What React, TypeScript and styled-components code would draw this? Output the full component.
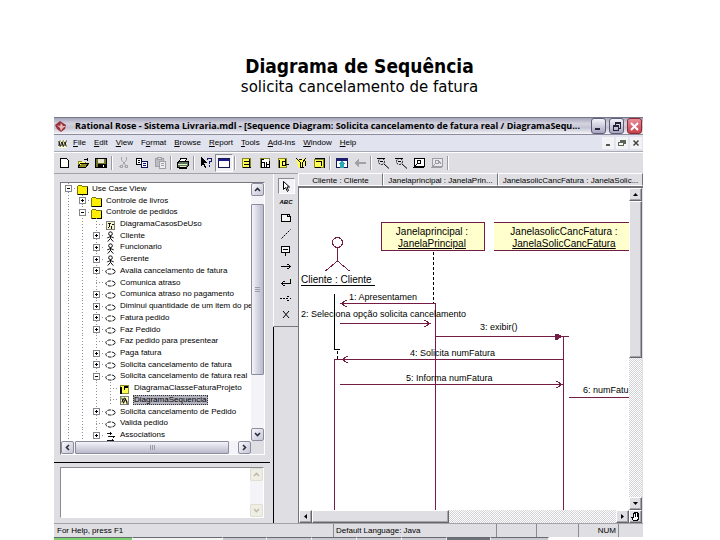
import React from "react";
import styled, { createGlobalStyle, css } from "styled-components";

const face = "#dfdfe3";
const maroon = "#741c44";
const uiFont = '"Liberation Sans", Arial, sans-serif';

const GlobalStyle = createGlobalStyle`
  *, *::before, *::after { box-sizing: border-box; }
  body { margin: 0; background: #fff; color: #000; font-family: ${uiFont}; font-size: 8px; }
  button { font: inherit; color: inherit; margin: 0; padding: 0; border: 0; background: none; }
  svg { display: block; flex: none; }
  h1, h2, p, ul { margin: 0; padding: 0; }
  ul { list-style: none; }
`;

const Page = styled.div`
  display: flex;
  flex-direction: column;
  height: 100vh;
  min-height: 540px;
  padding: 0 77px 0 54px;
`;

const Heading = styled.header`
  flex: none;
  height: 117px;
  padding-top: 54px;
  padding-left: 22px;
  text-align: center;
  white-space: nowrap;
`;

const Title = styled.h1`
  font: bold 19px/24px "DejaVu Sans Condensed", "DejaVu Sans", sans-serif;
`;

const Subtitle = styled.p`
  font: 15px/18px "DejaVu Sans", sans-serif;
`;

const AppWindow = styled.main`
  display: flex;
  flex-direction: column;
  flex: 1;
  min-height: 0;
  background: ${face};
`;

const TitleBar = styled.div`
  display: flex;
  align-items: center;
  flex: none;
  height: 18px;
  padding: 0 1px 0 0;
  gap: 3px;
  border-top: 1px solid #77778c;
  background: linear-gradient(#a5a5bb, #d4d4e0 35%, #c3c3d3 60%, #f4f4f8);
  border-bottom: 1px solid #8c8c9c;
`;

const WindowTitle = styled.h2`
  flex: 1;
  min-width: 0;
  padding-left: 4px;
  overflow: hidden;
  font: bold 9px/14px "Open Sans", "Noto Sans", sans-serif;
  white-space: nowrap;
`;

const CaptionButton = styled.button<{ $close?: boolean }>`
  display: grid;
  place-items: center;
  flex: none;
  width: 15px;
  height: 16px;
  border: 1px solid ${(p) => (p.$close ? "#8d2a34" : "#5d5d78")};
  border-radius: 3px;
  background: ${(p) =>
    p.$close ? "linear-gradient(#e8909a, #c8404c)" : "linear-gradient(#f4f4fa, #a6a6c0)"};
`;

const MenuBar = styled.nav`
  display: flex;
  align-items: center;
  flex: none;
  height: 17px;
  padding: 0 1px 0 3px;
  background: #e1e3ee;
  border-bottom: 1px solid #a9a9b2;
`;

const Menus = styled.div`
  display: flex;
  flex: 1;
  gap: 8px;
  padding-left: 5px;
`;

const MenuButton = styled.button`
  line-height: 12px;
  white-space: nowrap;
`;

const MdiButton = styled.button`
  display: grid;
  place-items: center;
  width: 12px;
  height: 12px;
  margin-left: 2px;
  background: #f3f3f5;
`;

const ToolBar = styled.div`
  display: flex;
  align-items: center;
  flex: none;
  height: 21px;
  padding-left: 2px;
  border-top: 1px solid #fff;
`;

const ToolButton = styled.button<{ $pressed?: boolean }>`
  display: grid;
  place-items: center;
  flex: none;
  width: 18px;
  height: 18px;
  ${(p) =>
    p.$pressed &&
    css`
      background: #f1f1f4;
      border: 1px solid;
      border-color: #8a8a92 #fff #fff #8a8a92;
    `}
`;

const ToolSeparator = styled.span`
  flex: none;
  width: 2px;
  height: 14px;
  margin: 0 2px 0 1px;
  border-left: 1px solid #9a9aa2;
  border-right: 1px solid #fff;
`;

const Body = styled.div`
  display: grid;
  grid-template-columns: 219px 25px minmax(0, 1fr);
  flex: 1;
  min-height: 0;
`;

const Sidebar = styled.section`
  display: flex;
  flex-direction: column;
  min-height: 0;
  border-top: 1px solid #a2a2aa;
`;

const TreeBox = styled.div`
  display: grid;
  grid-template: minmax(0, 1fr) 13px / minmax(0, 1fr) 13px;
  flex: 1;
  min-height: 0;
  margin: 8px 8px 0 6px;
  border: 1px solid;
  border-color: #77777f #fff #fff #77777f;
  background: #fff;
`;

const Tree = styled.ul`
  display: grid;
  grid-auto-rows: minmax(0, 1fr);
  min-width: 0;
  overflow: hidden;
`;

const TreeRow = styled.li`
  display: flex;
  align-items: center;
  min-height: 0;
  white-space: nowrap;
`;

const dots = "repeating-linear-gradient(#8f8f98 0 1px, transparent 1px 3px)";

const Guide = styled.span<{ $branch?: boolean }>`
  position: relative;
  display: grid;
  place-items: center;
  flex: none;
  width: 14px;
  align-self: stretch;
  background: ${dots} 7px 0 / 1px 100% no-repeat
    ${(p) =>
      p.$branch
        ? ", repeating-linear-gradient(90deg, #8f8f98 0 1px, transparent 1px 3px) 7px 50% / 7px 1px no-repeat"
        : ""};
`;

const Expander = styled.button`
  display: block;
  width: 7px;
  height: 7px;
  background: #fff;
`;

const NodeIcon = styled.span`
  display: grid;
  place-items: center;
  flex: none;
  width: 14px;
  height: 11px;
`;

const NodeLabel = styled.span<{ $selected?: boolean }>`
  margin-left: 2px;
  padding: 0 1px;
  line-height: 10px;
  ${(p) =>
    p.$selected &&
    css`
      background: #b2b2be;
      outline: 1px dotted #333;
      outline-offset: -1px;
    `}
`;

const XpBar = styled.div<{ $across?: boolean }>`
  display: flex;
  flex-direction: ${(p) => (p.$across ? "row" : "column")};
  min-width: 0;
  min-height: 0;
  background: #f3f3f8;
`;

const XpButton = styled.button<{ $off?: boolean }>`
  display: grid;
  place-items: center;
  flex: none;
  width: 13px;
  height: 13px;
  color: ${(p) => (p.$off ? "#bcbcae" : "#2c2c3c")};
  border: 1px solid ${(p) => (p.$off ? "#deded2" : "#8c8c9e")};
  border-radius: 2px;
  background: ${(p) => (p.$off ? "#eeeee4" : "linear-gradient(135deg, #f8f8fc, #c6c6d6)")};
`;

const XpThumb = styled.div<{ $across?: boolean }>`
  display: grid;
  place-items: center;
  flex: none;
  border: 1px solid #8c8c9e;
  border-radius: 1px;
  ${(p) =>
    p.$across
      ? "width: 154px; background: linear-gradient(#f4f4fa, #b9b9cb); margin-left: 1px;"
      : "height: 171px; background: linear-gradient(90deg, #f4f4fa, #b9b9cb); margin-top: 8px;"}
`;

const Spring = styled.div`
  flex: 1;
`;

const Corner = styled.div`
  background: ${face};
`;

const SidebarRule = styled.hr`
  flex: none;
  width: 216px;
  height: 1px;
  margin: 7px 0 4px;
  border: 0;
  background: #000;
`;

const DocBox = styled.div`
  display: flex;
  flex: none;
  height: 51px;
  margin: 0 9px 5px 6px;
  border: 1px solid;
  border-color: #8a8a92 #fff #fff #8a8a92;
  background: #fff;
`;

const DocText = styled.textarea`
  flex: 1;
  min-width: 0;
  padding: 2px;
  border: 0;
  resize: none;
  outline: none;
  font: inherit;
`;

const PaletteColumn = styled.div`
  display: flex;
  flex-direction: column;
  border-top: 1px solid #a2a2aa;
`;

const Palette = styled.div`
  display: flex;
  flex-direction: column;
  align-items: center;
  height: 153px;
  padding-top: 4px;
  border-left: 1px solid #fff;
  border-bottom: 1px solid #77777f;
`;

const PaletteButton = styled.button<{ $active?: boolean }>`
  display: grid;
  place-items: center;
  flex: none;
  width: 17px;
  height: 16px;
  ${(p) =>
    p.$active &&
    css`
      background: #f3f3f6;
      border: 1px solid;
      border-color: #8a8a92 #fff #fff #8a8a92;
    `}
`;

const PaletteRest = styled.div`
  flex: 1;
  border-left: 1px solid #000;
`;

const Document = styled.section`
  display: flex;
  flex-direction: column;
  min-height: 0;
  min-width: 0;
`;

const Lanes = styled.div`
  display: grid;
  grid-template-columns: 85px 115px minmax(0, 1fr);
  flex: none;
  height: 15px;
  border-bottom: 2px solid #73737a;
`;

const Lane = styled.div`
  overflow: hidden;
  border: 1px solid;
  border-color: #fff #73737a #fff #fff;
  line-height: 14px;
  text-align: center;
  white-space: nowrap;
`;

const Scroller = styled.div`
  display: grid;
  grid-template: minmax(0, 1fr) 13px / minmax(0, 1fr) 13px;
  flex: 1;
  min-height: 0;
  border-left: 1px solid #73737a;
  padding-right: 1px;
`;

const Canvas = styled.svg`
  width: 100%;
  height: 100%;
  min-width: 0;
  overflow: hidden;
  background: #fff;
  font-family: ${uiFont};
`;

const ClassicBar = styled.div<{ $across?: boolean }>`
  display: flex;
  flex-direction: ${(p) => (p.$across ? "row" : "column")};
  min-width: 0;
  min-height: 0;
  background: repeating-conic-gradient(#fff 0 25%, #d2d2d6 0 50%) 0 0 / 2px 2px;
`;

const raised = css`
  background: ${face};
  border: 1px solid;
  border-color: #fff #66666c #66666c #fff;
  box-shadow: inset -1px -1px 0 #a4a4aa;
`;

const ClassicButton = styled.button`
  ${raised}
  display: grid;
  place-items: center;
  flex: none;
  width: 13px;
  height: 13px;
`;

const ClassicThumb = styled.div<{ $across?: boolean }>`
  ${raised}
  flex: none;
  ${(p) => (p.$across ? "width: 137px;" : "height: 157px;")}
`;

const StatusBar = styled.footer`
  display: grid;
  grid-template-columns: 279px minmax(0, 1fr) 40px 42px 40px 25px;
  flex: none;
  height: 14px;
  border-top: 1px solid #a2a2aa;
  line-height: 14px;
`;

const StatusCell = styled.span<{ $end?: boolean }>`
  overflow: hidden;
  padding: 0 2px;
  white-space: nowrap;
  text-align: ${(p) => (p.$end ? "right" : "left")};
  & + & { border-left: 1px solid #8a8a92; }
  &:first-child { padding-left: 3px; }
`;

const TaskStrip = styled.div`
  display: flex;
  flex: none;
  height: 3px;
  background: #fff;
`;

const Task = styled.span<{ $tone: string; $w: number }>`
  flex: 0 1 ${(p) => p.$w}px;
  background: ${(p) => p.$tone};
  border-top: 1px solid #666a72;
  border-right: 1px solid #f4f4f4;
`;

type IconProps = { children: React.ReactNode; size?: number };
const Icon = ({ children, size = 14 }: IconProps) => (
  <svg width={size} height={size} viewBox={`0 0 ${size} ${size}`} fill="none" stroke="#000" shapeRendering="crispEdges" aria-hidden="true">
    {children}
  </svg>
);

const glyphs: Record<string, React.ReactNode> = {
  new: <path d="M2.5 2.5h6l2 2v7h-8z" fill="#fff" />,
  open: (
    <>
      <path d="M2 5h3l1 1h4v2h3l-3 4H2z" fill="#8c8c20" stroke="none" />
      <path d="M3 6h6v2H5l-2 3z" fill="#ffff60" stroke="none" />
      <path d="M1.5 11.5h8l3-4h-8l-3 4M8 3.5h2.5l1 1M11.5 2v3" />
    </>
  ),
  save: (
    <>
      <path d="M1.5 2.5h11v9h-11z" fill="#74742a" />
      <path d="M4 3h6v4H4z" fill="#e6e6d0" stroke="none" />
      <path d="M4 8.5h7v3H4z" fill="#000" />
      <path d="M9.5 9v2" stroke="#fff" />
    </>
  ),
  cut: (
    <g stroke="#a6a6ac">
      <path d="M4.5 1v3l4 5M9.5 1v3l-4 5" shapeRendering="auto" />
      <circle cx="4.5" cy="10.5" r="1.5" />
      <circle cx="9.5" cy="10.5" r="1.5" />
    </g>
  ),
  copy: (
    <>
      <path d="M1.5 2.5h5v6h-5z" fill="#fff" />
      <path d="M3 4.5h2M3 6.5h2" />
      <path d="M6.5 5.5h6v6h-6z" fill="#fff" stroke="#10105c" />
      <path d="M8 7.5h3M8 9.5h3" stroke="#10105c" />
    </>
  ),
  paste: (
    <g stroke="#a0a0a6">
      <path d="M2.5 2.5h8v8h-8z" fill="#bcbcc2" />
      <path d="M4.5 1.5h4v2h-4z" fill="#dedee2" />
      <path d="M6.5 5.5h6v7h-6zM8 7.5h3M8 9.5h3" fill="#eee" />
    </g>
  ),
  print: (
    <>
      <path d="M4.5 2.5h6l-1 3h-6z" fill="#fff" />
      <path d="M1.5 6.5l2-1h9v4l-2 2h-9z" fill="#5c7460" />
      <path d="M2 8.5h9M3.5 10.5h6" stroke="#e8f0c0" />
      <path d="M2.5 12.5h8" />
    </>
  ),
  help: (
    <>
      <path d="M2 1v9l2-2 2 4 1-1-2-4h3z" fill="#000" stroke="none" />
      <path d="M8.5 4V2.5h4v3h-2V8M10.5 9v2" stroke="#16166c" />
    </>
  ),
  pane: (
    <>
      <path d="M1.5 2.5h11v9h-11z" fill="#fff" stroke="#16164c" />
      <path d="M1 3h12v2H1z" fill="#1c1c88" stroke="none" />
    </>
  ),
  browseClass: (
    <>
      <path d="M2.5 2.5h8v9h-8z" fill="#ffff50" stroke="#85852a" />
      <path d="M4 5.5h5M4 8.5h5M9.5 3v9M3 11.5h8" />
    </>
  ),
  interaction: (
    <>
      <path d="M2.5 2.5h9v9h-9z" fill="#fff" stroke="#85852a" />
      <path d="M3.5 3v9M6.5 6v5M4 6.5h3M8.5 6v5M9 8.5h3M11.5 5v7M3 3.5h3M3 11.5h9" />
    </>
  ),
  component: (
    <>
      <path d="M2.5 2.5h8v9h-8z" fill="#ffff50" stroke="#85852a" />
      <path d="M3.5 4v8M6.5 5v5M9.5 3v6M6 5.5h3M10 8.5h3M6.5 9.5h3" />
    </>
  ),
  state: (
    <>
      <path d="M2 3h10v3l-3 6H5z" fill="#ffff50" stroke="none" />
      <path d="M2.5 2.5l4 4v5M11.5 2.5l-3 4v5M5 3.5h3M6 11.5h4M11.5 5v5" />
    </>
  ),
  deployment: (
    <>
      <path d="M2.5 3.5h9v8h-9z" fill="#ffff50" stroke="#85852a" />
      <path d="M3 2.5h9v9M4 5.5h5v4M3 11.5h6" />
    </>
  ),
  parent: (
    <>
      <path d="M1.5 2.5h11v9h-11z" fill="#fff" stroke="#16164c" />
      <path d="M1 2h12v3H1z" fill="#1c1c70" stroke="none" />
      <path d="M7 5l4 3H9v4H5V8H3z" fill="#28aab4" stroke="none" />
    </>
  ),
  back: <path d="M1 7l5-4v3h7v2H6v3z" fill="#a0a0a6" stroke="none" />,
  zoom: (
    <g shapeRendering="auto">
      <circle cx="5.5" cy="5.5" r="3" strokeDasharray="2 1" />
      <path d="M8 8l5 4.5M1 2.5h8M4 5.5h3" />
    </g>
  ),
  fit: (
    <>
      <path d="M2.5 2.5h10v8h-10z" fill="#fff" />
      <circle cx="7" cy="6" r="2" />
      <path d="M1 11.5h11M5 8l-3 4" />
    </>
  ),
  unfit: (
    <g stroke="#9c9ca4">
      <path d="M2.5 2.5h10v8h-10z" fill="#e9e9ed" />
      <circle cx="7" cy="6" r="2" />
      <path d="M1 11.5h11M8 4l3 4M5 8l-3 4" />
    </g>
  ),
  select: (
    <>
      <path d="M4.5 2.5v8l2-2 2 4 1-1-1.500-3.500h2.500z" fill="#fff" shapeRendering="auto" />
    </>
  ),
  note: <path d="M2.5 3.5h6v2h3v5h-9zM8.5 3.5h2v2" fill="#f4f4f4" />,
  anchor: <path d="M2.5 11.5l9-9" strokeDasharray="2 1" shapeRendering="auto" />,
  comment: <path d="M2.5 3.5h8v6h-8zM4 6.5h5M6.5 10v3" fill="#f4f4f4" />,
  message: <path d="M2 7.5h9M8.5 5l3 2.5-3 2.5" />,
  selfMessage: <path d="M11.5 4v4.5H3M5.5 6l-3 2.5 3 2.5" />,
  dashed: <path d="M1 7.5h9M8.5 5l3 2.5-3 2.5" strokeDasharray="2 1" />,
  destroy: <path d="M4 4l6 7M10 4l-6 7" shapeRendering="auto" />,
  folder: (
    <>
      <path d="M2.5 3.5l1-1h3l1 1h5v8h-10z" fill="#ffef00" stroke="#77770c" />
      <path d="M3 11.5h10M12.5 4v8" />
    </>
  ),
  useCaseDiagram: (
    <>
      <path d="M2.5 2.5h9v9h-9z" fill="#f4f4cc" stroke="#777" />
      <path d="M4 4.5h3M5.5 4v3l-2 3M9 5.5h2M8.5 7v4" />
    </>
  ),
  actor: (
    <g shapeRendering="auto">
      <circle cx="7" cy="4" r="2" />
      <path d="M7 6v3M3.5 8.5L7 7l3.5 1.500M4 12.5l3-3.5 3 3.5" />
    </g>
  ),
  useCase: <ellipse cx="7" cy="7" rx="5" ry="2.8" shapeRendering="auto" strokeDasharray="4 1" />,
  classDiagram: (
    <>
      <path d="M2.5 2.5h9v9h-9z" fill="#ffff50" stroke="#85852a" />
      <path d="M2 4h2v8H2zM6 3h5v2H8v3H6z" fill="#000" stroke="none" />
    </>
  ),
  sequenceDiagram: (
    <>
      <path d="M2.5 2.5h9v9h-9z" fill="#ffffc0" stroke="#777" />
      <path d="M4 4l2 6 2-5 2 6M4 9l3-5 3 5" shapeRendering="auto" />
    </>
  ),
  associations: <path d="M3 3.5h6M7.5 2v3M4 7.5h8M10.5 6v3M3 11.5h8M9.5 10v3" />,
  menu: (
    <>
      <path d="M1 2h12v11H1z" fill="#ffffd8" stroke="none" />
      <path d="M2 4l2 7 2-6 2 6 2-6 2 6M2 10l2-7M6 10l2-7M10 10l2-7" shapeRendering="auto" />
    </>
  ),
};

const AbcMark = styled.span`
  font: italic bold 6px/10px ${uiFont};
`;

const Glyph = ({ name, size = 14 }: { name: string; size?: number }) =>
  name === "abc" ? (
    <AbcMark>ABC</AbcMark>
  ) : (
    <svg width={size} height={size} viewBox="0 0 14 14" fill="none" stroke="#000" shapeRendering="crispEdges" aria-hidden="true">
      {glyphs[name]}
    </svg>
  );

const Arrow = ({ turn = 0, solid = false }: { turn?: number; solid?: boolean }) => (
  <svg width="9" height="9" viewBox="0 0 9 9" aria-hidden="true">
    <g transform={`rotate(${turn} 4.5 4.5)`}>
      {solid ? (
        <path d="M2 6h5L4.5 3z" fill="#000" />
      ) : (
        <path d="M2 6l2.5-2.5L7 6" fill="none" stroke="currentColor" strokeWidth="1.6" />
      )}
    </g>
  </svg>
);

const menus: [string, string, string][] = [
  ["", "F", "ile"], ["", "E", "dit"], ["", "V", "iew"], ["F", "o", "rmat"], ["", "B", "rowse"],
  ["", "R", "eport"], ["", "T", "ools"], ["", "A", "dd-Ins"], ["", "W", "indow"], ["", "H", "elp"],
];

const toolGroups = [
  ["new", "open", "save"],
  ["cut", "copy", "paste"],
  ["print"],
  ["help", "pane"],
  ["browseClass", "interaction", "component", "state", "deployment"],
  ["parent", "back"],
  ["zoom", "zoom", "fit", "unfit"],
];

const paletteTools = ["select", "abc", "note", "anchor", "comment", "message", "selfMessage", "dashed", "destroy"];

type Node = { depth: number; mark: "+" | "-" | ""; icon: string; label: string; selected?: boolean };
const uc = (mark: Node["mark"], label: string): Node => ({ depth: 2, mark, icon: "useCase", label });
const nodes: Node[] = [
  { depth: 0, mark: "-", icon: "folder", label: "Use Case View" },
  { depth: 1, mark: "+", icon: "folder", label: "Controle de livros" },
  { depth: 1, mark: "-", icon: "folder", label: "Controle de pedidos" },
  { depth: 2, mark: "", icon: "useCaseDiagram", label: "DiagramaCasosDeUso" },
  { depth: 2, mark: "+", icon: "actor", label: "Cliente" },
  { depth: 2, mark: "+", icon: "actor", label: "Funcionario" },
  { depth: 2, mark: "+", icon: "actor", label: "Gerente" },
  uc("+", "Avalia cancelamento de fatura"),
  uc("", "Comunica atraso"),
  uc("+", "Comunica atraso no pagamento"),
  uc("+", "Diminui quantidade de um item do ped"),
  uc("+", "Fatura pedido"),
  uc("+", "Faz Pedido"),
  uc("", "Faz pedido para presentear"),
  uc("+", "Paga fatura"),
  uc("+", "Solicita cancelamento de fatura"),
  uc("-", "Solicita cancelamento de fatura real"),
  { depth: 3, mark: "", icon: "classDiagram", label: "DiagramaClasseFaturaProjeto" },
  { depth: 3, mark: "", icon: "sequenceDiagram", label: "DiagramaSequencia", selected: true },
  uc("+", "Solicita cancelamento de Pedido"),
  uc("", "Valida pedido"),
  { depth: 2, mark: "+", icon: "associations", label: "Associations" },
];

const Diagram = () => (
  <Canvas role="img" aria-label="Sequence diagram">
    <g fill="none" stroke={maroon} shapeRendering="crispEdges">
      <circle cx="38.5" cy="54.5" r="5" />
      <path d="M38.5 59v14M38.5 73l-12 10M38.5 73l12 10" />
      <path d="M82.5 34.5h103v28h-103z" fill="#ffffce" />
      <rect x="195" y="34" width="100%" height="29" fill="#ffffce" stroke="none" />
      <path d="M195 34.5h2000M195 62.5h2000" />
      <path d="M35.5 2000V171.5h229M136.5 2000V115.5H41M41 135.5h90M136 148.5h134M264.5 148v2000M41 196.5h223M270 209.5h2000" />
      <path d="M48 112l-6 3.5 6 3.5M125 132l6 3.5-6 3.5M49 168l-6 3.5 6 3.5M257 193l6 3.5-6 3.5" />
      <path d="M256 146v5h3l3-2.5-3-2.5z" fill={maroon} />
    </g>
    <g fill="none" stroke="#000" shapeRendering="crispEdges">
      <path d="M35.5 106v55.5H41M2 97.5h74" />
      <path d="M38.5 163v8M134.5 64v51" strokeDasharray="3 2" />
    </g>
    <g fontSize="10">
      <text x="2" y="95">Cliente : Cliente</text>
      <g textAnchor="middle">
        <text x="133" y="47">Janelaprincipal :</text>
        <text x="133" y="59" textDecoration="underline">JanelaPrincipal</text>
        <text x="265" y="47">JanelasolicCancFatura :</text>
        <text x="265" y="59" textDecoration="underline">JanelaSolicCancFatura</text>
      </g>
    </g>
    <g fontSize="9">
      <text x="50" y="112">1: Apresentamen</text>
      <text x="2" y="129">2: Seleciona opção solicita cancelamento</text>
      <text x="181" y="142">3: exibir()</text>
      <text x="111" y="168">4: Solicita numFatura</text>
      <text x="107" y="193">5: Informa numFatura</text>
      <text x="284" y="205">6: numFatu</text>
    </g>
  </Canvas>
);

export default function App() {
  return (
    <Page>
      <GlobalStyle />
      <Heading>
        <Title>Diagrama de Sequência</Title>
        <Subtitle>solicita cancelamento de fatura</Subtitle>
      </Heading>
      <AppWindow>
        <TitleBar>
          <Icon>
            <g shapeRendering="auto" stroke="none">
              <path d="M1 6l5-4 6 4-1 4-4 3-4-3z" fill="#98323c" />
              <path d="M3 6l3 1 1-3 2 3 3 0-3 2 -2 3-1-3z" fill="#e8b8b8" />
            </g>
          </Icon>
          <WindowTitle>
            Rational Rose - Sistema Livraria.mdl - [Sequence Diagram: Solicita cancelamento de fatura real / DiagramaSequ...
          </WindowTitle>
          <CaptionButton aria-label="Minimize">
            <Icon size={11}><path d="M2 8h5" stroke="#222238" strokeWidth="2" /></Icon>
          </CaptionButton>
          <CaptionButton aria-label="Restore">
            <Icon size={11}><path d="M4 3.5V2h5v5H7M4 1.5h6M2.5 4.5h5v5h-5zM2 5.5h6" stroke="#222238" /></Icon>
          </CaptionButton>
          <CaptionButton $close aria-label="Close">
            <Icon size={11}><path d="M2 2l7 7M9 2L2 9" stroke="#fff" strokeWidth="2" shapeRendering="auto" /></Icon>
          </CaptionButton>
        </TitleBar>
        <MenuBar>
          <Glyph name="menu" size={11} />
          <Menus>
            {menus.map(([pre, key, post]) => (
              <MenuButton key={key + post}>{pre}<u>{key}</u>{post}</MenuButton>
            ))}
          </Menus>
          <MdiButton aria-label="Minimize diagram"><Icon size={10}><path d="M3 7h4" stroke="#555" strokeWidth="2" /></Icon></MdiButton>
          <MdiButton aria-label="Restore diagram"><Icon size={10}><path d="M3 2h6v4H7V4H3z" fill="#5c6458" stroke="none" /><path d="M1.5 4.5h5v3h-5z" stroke="#5c6458" /></Icon></MdiButton>
          <MdiButton aria-label="Close diagram"><Icon size={10}><path d="M2.5 2.5l5 5M7.5 2.5l-5 5" stroke="#444" strokeWidth="1.5" shapeRendering="auto" /></Icon></MdiButton>
        </MenuBar>
        <ToolBar role="toolbar">
          {toolGroups.map((group, g) => (
            <React.Fragment key={g}>
              {group.map((name, i) => (
                <ToolButton key={i} $pressed={name === "pane"} aria-label={name}><Glyph name={name} /></ToolButton>
              ))}
              <ToolSeparator />
            </React.Fragment>
          ))}
        </ToolBar>
        <Body>
          <Sidebar>
            <TreeBox>
              <Tree>
                {nodes.map((n, i) => (
                  <TreeRow key={i}>
                    {Array.from({ length: n.depth }, (_, d) => <Guide key={d} />)}
                    <Guide $branch>
                      {n.mark && (
                        <Expander aria-label={n.mark === "+" ? "Expand" : "Collapse"}>
                          <Icon size={7}>
                            <path d="M.5.5h6v6h-6z" stroke="#85858d" />
                            <path d={n.mark === "+" ? "M2 3.5h3M3.5 2v3" : "M2 3.5h3"} />
                          </Icon>
                        </Expander>
                      )}
                    </Guide>
                    <NodeIcon><Glyph name={n.icon} size={n.icon === "folder" ? 14 : 13} /></NodeIcon>
                    <NodeLabel $selected={n.selected}>{n.label}</NodeLabel>
                  </TreeRow>
                ))}
              </Tree>
              <XpBar>
                <XpButton aria-label="Scroll up"><Arrow /></XpButton>
                <XpThumb><Icon size={7}><path d="M1 1.5h5M1 3.5h5M1 5.5h5" stroke="#9a9aac" /></Icon></XpThumb>
                <Spring />
                <XpButton aria-label="Scroll down"><Arrow turn={180} /></XpButton>
              </XpBar>
              <XpBar $across>
                <XpButton aria-label="Scroll left"><Arrow turn={270} /></XpButton>
                <XpThumb $across><Icon size={7}><path d="M1.5 1v5M3.5 1v5M5.5 1v5" stroke="#9a9aac" /></Icon></XpThumb>
                <Spring />
                <XpButton aria-label="Scroll right"><Arrow turn={90} /></XpButton>
              </XpBar>
              <Corner />
            </TreeBox>
            <SidebarRule />
            <DocBox>
              <DocText aria-label="Documentation" />
              <XpBar>
                <XpButton $off aria-label="Scroll up"><Arrow /></XpButton>
                <Spring />
                <XpButton $off aria-label="Scroll down"><Arrow turn={180} /></XpButton>
              </XpBar>
            </DocBox>
          </Sidebar>
          <PaletteColumn>
            <Palette>
              {paletteTools.map((name, i) => (
                <PaletteButton key={name} $active={i === 0} aria-label={name}><Glyph name={name} /></PaletteButton>
              ))}
            </Palette>
            <PaletteRest />
          </PaletteColumn>
          <Document>
            <Lanes>
              <Lane>Cliente : Cliente</Lane>
              <Lane>Janelaprincipal : JanelaPrin...</Lane>
              <Lane>JanelasolicCancFatura : JanelaSolic...</Lane>
            </Lanes>
            <Scroller>
              <Diagram />
              <ClassicBar>
                <ClassicButton aria-label="Scroll up"><Arrow solid /></ClassicButton>
                <ClassicThumb />
                <Spring />
                <ClassicButton aria-label="Scroll down"><Arrow solid turn={180} /></ClassicButton>
              </ClassicBar>
              <ClassicBar $across>
                <ClassicButton aria-label="Scroll left"><Arrow solid turn={270} /></ClassicButton>
                <ClassicThumb $across />
                <Spring />
                <ClassicButton aria-label="Scroll right"><Arrow solid turn={90} /></ClassicButton>
              </ClassicBar>
              <ClassicButton aria-label="Pan">
                <Icon size={11}><path d="M3.5 9.5l-2-3h2v-4h1v-1h3v1h1v5l-1 2zM5.5 2v4M7.5 2v4" fill="#fff" /></Icon>
              </ClassicButton>
            </Scroller>
          </Document>
        </Body>
        <StatusBar>
          <StatusCell>For Help, press F1</StatusCell>
          <StatusCell>Default Language: Java</StatusCell>
          <StatusCell />
          <StatusCell />
          <StatusCell $end>NUM</StatusCell>
          <StatusCell />
        </StatusBar>
        <TaskStrip>
          <Task $w={79} $tone="#7fd070" />
          <Task $w={90} $tone="#f4f4f4" />
          <Task $w={44} $tone="#c9c9cf" />
          <Task $w={45} $tone="#c9c9cf" />
          <Task $w={45} $tone="#c9c9cf" />
          <Task $w={45} $tone="#c9c9cf" />
          <Task $w={45} $tone="#c9c9cf" />
          <Task $w={44} $tone="#70707a" />
          <Task $w={58} $tone="#c9c9cf" />
        </TaskStrip>
      </AppWindow>
    </Page>
  );
}
